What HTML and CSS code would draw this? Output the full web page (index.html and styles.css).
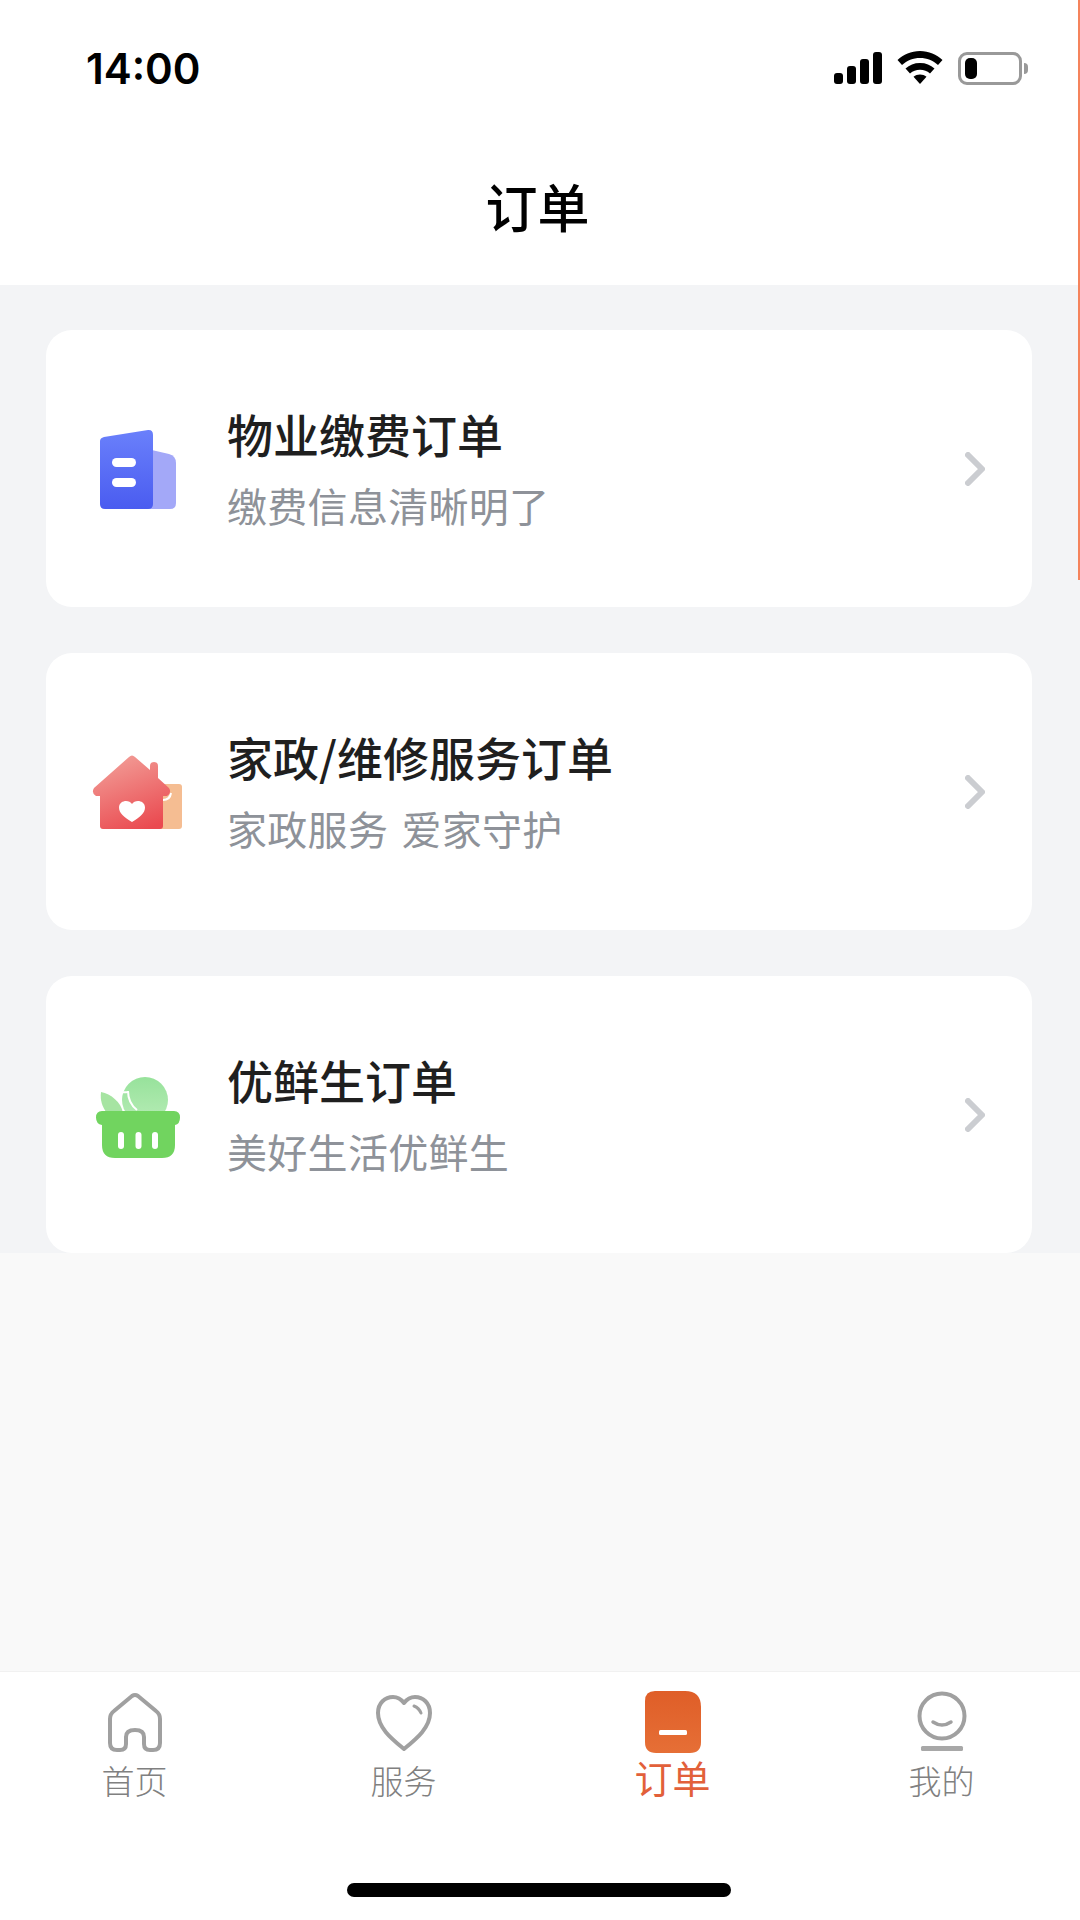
FILE: index.html
```html
<!DOCTYPE html>
<html lang="zh-CN">

<head>
    <meta charset="UTF-8">
    <meta name="viewport" content="width=device-width, initial-scale=1.0">
    <title>订单</title>
    <link rel="stylesheet" href="styles.css">
</head>

<body>
    <div class="edge-line"></div>

    <header class="top">
        <div class="status">
            <span class="time">14:00</span>
            <div class="status-icons">
                <svg class="signal" width="48" height="32" viewBox="0 0 48 32">
                    <rect x="0" y="21" width="9" height="11" rx="3"/>
                    <rect x="13" y="14" width="9" height="18" rx="3"/>
                    <rect x="26" y="7" width="9" height="25" rx="3"/>
                    <rect x="39" y="0" width="9" height="32" rx="3"/>
                </svg>
                <svg class="wifi" width="46" height="34" viewBox="0 0 46 34">
                    <path d="M23 0C14 0 6.500 3.500 0.500 9L5 14C10 9.500 16 7 23 7C30 7 36 9.500 41 14L45.500 9C39.500 3.500 32 0 23 0Z"/>
                    <path d="M23 12C17 12 12.500 14 8.500 17.500L13 22.500C16 20 19 18.800 23 18.800C27 18.800 30 20 33 22.500L37.500 17.500C33.500 14 29 12 23 12Z"/>
                    <path d="M23 23.500C20.500 23.500 18.500 24.300 16.500 25.800L23 33L29.500 25.800C27.500 24.300 25.500 23.500 23 23.500Z"/>
                </svg>
                <div class="battery">
                    <div class="battery-body"><div class="battery-level"></div></div>
                    <div class="battery-cap"></div>
                </div>
            </div>
        </div>
        <div class="nav-title">订单</div>
    </header>

    <main class="page">
        <div class="order-list">
            <a class="order-card" href="#">
                <svg class="order-icon" width="100" height="100" viewBox="0 0 100 100">
                    <defs>
                        <linearGradient id="docGrad" x1="0" y1="0" x2="0" y2="1">
                            <stop offset="0" stop-color="#6a80fb"/>
                            <stop offset="1" stop-color="#4a5cf0"/>
                        </linearGradient>
                    </defs>
                    <path d="M55 29L81 35Q88 37 88 44V84Q88 90 82 90H55Z" fill="#a3a8f8"/>
                    <path d="M16 18L60 11Q65 10.500 65 16V85Q65 90 60 90H17Q12 90 12 85V22Q12 19 16 18Z" fill="url(#docGrad)"/>
                    <rect x="24" y="39" width="24" height="9" rx="4.500" fill="#fff"/>
                    <rect x="24" y="59" width="24" height="9" rx="4.500" fill="#fff"/>
                </svg>
                <div class="order-text">
                    <div class="order-name">物业缴费订单</div>
                    <div class="order-desc">缴费信息清晰明了</div>
                </div>
                <svg class="chevron" width="20" height="34" viewBox="0 0 20 34">
                    <path d="M3 3L17 17L3 31" fill="none" stroke="#cbcdd1" stroke-width="6" stroke-linecap="round" stroke-linejoin="round"/>
                </svg>
            </a>

            <a class="order-card" href="#">
                <svg class="order-icon" width="100" height="100" viewBox="0 0 100 100">
                    <defs>
                        <linearGradient id="houseGrad" x1="0.3" y1="0" x2="0.7" y2="1">
                            <stop offset="0" stop-color="#f29c96"/>
                            <stop offset="1" stop-color="#ea4a50"/>
                        </linearGradient>
                    </defs>
                    <rect x="66" y="42" width="28" height="45" rx="3" fill="#f5bd92"/>
                    <path d="M75 58Q82 58 83 51" fill="none" stroke="#fff" stroke-width="2"/>
                    <path d="M41 15Q44 12 47 15L62 28V24Q62 20 66 20Q70 20 70 24V36L81 46Q84 51 79 54H75V84Q75 87 72 87H15Q12 87 12 84V54H8Q3 51 6 46Z" fill="url(#houseGrad)"/>
                    <path d="M44 80C36 75 31 71 31 65.500C31 61 35 59 38 59C40.500 59 42.800 60 44 62C45.200 60 47.500 59 50 59C53 59 57 61 57 65.500C57 71 52 75 44 80Z" fill="#fff"/>
                </svg>
                <div class="order-text">
                    <div class="order-name">家政/维修服务订单</div>
                    <div class="order-desc">家政服务 爱家守护</div>
                </div>
                <svg class="chevron" width="20" height="34" viewBox="0 0 20 34">
                    <path d="M3 3L17 17L3 31" fill="none" stroke="#cbcdd1" stroke-width="6" stroke-linecap="round" stroke-linejoin="round"/>
                </svg>
            </a>

            <a class="order-card" href="#">
                <svg class="order-icon basket" width="100" height="100" viewBox="0 0 100 100">
                    <defs>
                        <linearGradient id="fruitGrad" x1="0.5" y1="0" x2="0.5" y2="1">
                            <stop offset="0" stop-color="#97e29b"/>
                            <stop offset="1" stop-color="#b7ecb6"/>
                        </linearGradient>
                    </defs>
                    <path d="M13 27C23 29 33 37 35 48H19C14 42 12 35 13 27Z" fill="#a6e4a2"/>
                    <circle cx="57" cy="35" r="23" fill="url(#fruitGrad)"/>
                    <path d="M33 27Q40 28 40 26Q40 38 49 45" fill="none" stroke="#fff" stroke-width="2"/>
                    <path d="M14 46H86Q92 46 92 52.500Q92 59 87 60V80Q87 93 74 93H27Q14 93 14 80V60Q8 59 8 52.500Q8 46 14 46Z" fill="#71d45f"/>
                    <rect x="30" y="67" width="6" height="17" rx="3" fill="#fff"/>
                    <rect x="47.500" y="67" width="6" height="17" rx="3" fill="#fff"/>
                    <rect x="64" y="67" width="6" height="17" rx="3" fill="#fff"/>
                </svg>
                <div class="order-text">
                    <div class="order-name">优鲜生订单</div>
                    <div class="order-desc">美好生活优鲜生</div>
                </div>
                <svg class="chevron" width="20" height="34" viewBox="0 0 20 34">
                    <path d="M3 3L17 17L3 31" fill="none" stroke="#cbcdd1" stroke-width="6" stroke-linecap="round" stroke-linejoin="round"/>
                </svg>
            </a>
        </div>
    </main>

    <nav class="tabbar">
        <a class="tab" href="#">
            <svg width="64" height="64" viewBox="0 0 64 64">
                <path d="M29 6Q32 4 35 6L53 21Q57 24 57 29V53Q57 60 50 60H47Q41 60 41 54V47Q41 40 32 40Q23 40 23 47V54Q23 60 17 60H14Q7 60 7 53V29Q7 24 11 21Z" fill="none" stroke="#a0a0a0" stroke-width="4" stroke-linejoin="round"/>
            </svg>
            <span>首页</span>
        </a>
        <a class="tab" href="#">
            <svg width="64" height="64" viewBox="0 0 64 64">
                <path d="M32 59C20 49 6 38 6 23C6 13 13 7 21 7C25.500 7 29 9 32 13C35 9 38.500 7 43 7C51 7 58 13 58 23C58 38 44 49 32 59Z" fill="none" stroke="#a0a0a0" stroke-width="4" stroke-linejoin="round"/>
                <path d="M42 16Q47 18 49 23" fill="none" stroke="#a0a0a0" stroke-width="3" stroke-linecap="round"/>
            </svg>
            <span>服务</span>
        </a>
        <a class="tab tab-active" href="#">
            <svg width="64" height="64" viewBox="0 0 64 64">
                <defs>
                    <linearGradient id="tabGrad" x1="0" y1="0" x2="0" y2="1">
                        <stop offset="0" stop-color="#df5e28"/>
                        <stop offset="1" stop-color="#e66f36"/>
                    </linearGradient>
                </defs>
                <path d="M14 1H44Q60 1 60 17V52Q60 63 49 63H15Q4 63 4 52V11Q4 1 14 1Z" fill="url(#tabGrad)"/>
                <rect x="18" y="40" width="28" height="5" rx="1.500" fill="#fff"/>
            </svg>
            <span>订单</span>
        </a>
        <a class="tab" href="#">
            <svg width="64" height="64" viewBox="0 0 64 64">
                <circle cx="32" cy="26" r="22.500" fill="none" stroke="#a0a0a0" stroke-width="4"/>
                <path d="M23 32Q32 38 41 32" fill="none" stroke="#a0a0a0" stroke-width="3.500" stroke-linecap="round"/>
                <rect x="11" y="56" width="42" height="5" rx="1.500" fill="#a8a8a8"/>
            </svg>
            <span>我的</span>
        </a>
        <div class="home-bar"></div>
    </nav>
</body>

</html>
```

FILE: styles.css
```css
* {
    box-sizing: border-box;
}

body {
    margin: 0;
    width: 1080px;
    height: 1920px;
    display: flex;
    flex-direction: column;
    position: relative;
    overflow: hidden;
    background: #f9f9f9;
    color: #1f1f1f;
    font-family: "Noto Sans CJK SC", "Noto Sans", sans-serif;
}

a {
    color: inherit;
    text-decoration: none;
}

.edge-line {
    position: absolute;
    top: 0;
    right: 0;
    width: 2px;
    height: 580px;
    background: #f5835c;
}

.top {
    height: 285px;
    background: #fff;
}

.status {
    height: 136px;
    padding: 0 52px 0 86px;
    display: flex;
    justify-content: space-between;
    align-items: center;
}

.time {
    font-family: Inter, "Liberation Sans", sans-serif;
    font-size: 42px;
    font-weight: 600;
    color: #000;
}

.status-icons {
    display: flex;
    align-items: center;
    gap: 15px;
}

.battery {
    display: flex;
    align-items: center;
    gap: 2px;
}

.battery-body {
    width: 64px;
    height: 33px;
    padding: 3px 4px;
    border: 3px solid #999;
    border-radius: 9px;
}

.battery-level {
    width: 12px;
    height: 100%;
    border-radius: 5px;
    background: #000;
}

.battery-cap {
    width: 4px;
    height: 11px;
    border-radius: 0 4px 4px 0;
    background: #999;
}

.nav-title {
    height: 148px;
    padding: 0 5px 10px 0;
    display: flex;
    justify-content: center;
    align-items: center;
    font-size: 52px;
    font-weight: 500;
    color: #000;
}

.page {
    flex: 1;
}

.order-list {
    padding: 45px 48px 0 46px;
    display: flex;
    flex-direction: column;
    gap: 46px;
    background: #f3f4f6;
}

.order-card {
    height: 277px;
    padding: 0 47px 0 42px;
    display: flex;
    align-items: center;
    border-radius: 26px;
    background: #fff;
}

.order-icon {
    flex-shrink: 0;
}

.order-text {
    flex: 1;
    margin-left: 39px;
    padding-bottom: 3px;
}

.order-name {
    font-size: 46px;
    font-weight: 500;
    line-height: 66px;
}

.order-desc {
    margin-top: 10px;
    font-size: 40px;
    line-height: 58px;
    letter-spacing: 0.3px;
    word-spacing: 4px;
    color: #8e9299;
}

.tabbar {
    height: 249px;
    padding-top: 18px;
    display: flex;
    align-items: flex-start;
    position: relative;
    background: #fff;
    border-top: 1px solid #f1f1f1;
}

.tab {
    width: 269px;
    display: flex;
    flex-direction: column;
    align-items: center;
    font-size: 33px;
    font-weight: 300;
    line-height: 46px;
    color: #808080;
}

.tab span {
    margin-top: 3px;
}

.tab-active {
    font-size: 38px;
    font-weight: 400;
    color: #e2603a;
}

.tab-active span {
    margin-top: 0;
}

.home-bar {
    position: absolute;
    left: 347px;
    bottom: 23px;
    width: 384px;
    height: 14px;
    border-radius: 7px;
    background: #000;
}
```
